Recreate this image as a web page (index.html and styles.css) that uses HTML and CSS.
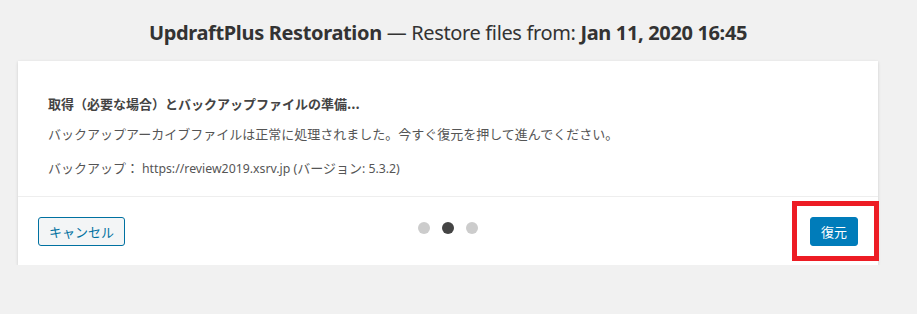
FILE: index.html
```html
<!DOCTYPE html>
<html lang="ja">
  <head>
    <meta charset="UTF-8" />
    <meta name="viewport" content="width=device-width, initial-scale=1.0" />
    <title>UpdraftPlus Restoration</title>
    <link rel="stylesheet" href="styles.css">
  </head>
  <body>
    <h1 class="title">
      <strong>UpdraftPlus Restoration</strong>&nbsp;— Restore files from:&nbsp;<strong>Jan 11, 2020 16:45</strong>
    </h1>
    <div class="card">
      <div class="card-body">
        <p class="step-title">取得（必要な場合）とバックアップファイルの準備...</p>
        <p>バックアップアーカイブファイルは正常に処理されました。今すぐ復元を押して進んでください。</p>
        <p>バックアップ： <span class="latin">https://review2019.xsrv.jp (</span>バージョン<span class="latin">: 5.3.2)</span></p>
      </div>
      <div class="card-footer">
        <button class="btn btn-secondary" type="button">キャンセル</button>
        <div class="steps">
          <span class="dot"></span>
          <span class="dot active"></span>
          <span class="dot"></span>
        </div>
        <div class="restore-wrap">
          <button class="btn btn-primary" type="button">復元</button>
          <span class="highlight"></span>
        </div>
      </div>
    </div>
  </body>
</html>
```

FILE: styles.css
```css
body {
  margin: 0;
  background-color: #f1f1f1;
  font-family: "Noto Sans", "Noto Sans CJK JP", sans-serif;
  color: #444;
}

.title {
  margin: 0 39px 0 18px;
  height: 61px;
  display: flex;
  align-items: center;
  justify-content: center;
  padding-top: 4px;
  box-sizing: border-box;
  font-size: 20px;
  font-weight: normal;
  color: #333;
  letter-spacing: -0.35px;
}

.title strong {
  font-weight: bold;
}

.card {
  margin: 0 39px 0 18px;
  background: white;
  box-shadow: 0 1px 3px rgba(0, 0, 0, 0.15);
}

.card-body {
  padding: 33px 30px 18px;
  font-family: "Noto Sans CJK JP", sans-serif;
  font-size: 13px;
  color: #555;
  border-bottom: 1px solid #eeeeee;
}

.card-body p {
  margin: 0 0 15px;
  line-height: 19px;
}

.card-body p:last-child {
  margin-bottom: 0;
}

.card-body .step-title {
  font-weight: bold;
  color: #444;
  margin-bottom: 11px;
}

.latin {
  font-family: "Noto Sans", sans-serif;
  font-size: 12.3px;
}

.card-footer {
  display: flex;
  align-items: center;
  justify-content: space-between;
  padding: 20px 20px 19px;
}

.btn {
  font-family: "Noto Sans CJK JP", sans-serif;
  font-size: 13px;
  height: 29px;
  padding: 0 8px;
  border-radius: 3px;
  cursor: pointer;
}

.btn-secondary {
  width: 87px;
  background: #f3f5f6;
  color: #0071a1;
  border: 1px solid #0071a1;
}

.btn-primary {
  width: 48px;
  background: #007cba;
  color: white;
  border: 1px solid #007cba;
}

.steps {
  display: flex;
  gap: 12px;
  margin-top: -7px;
}

.dot {
  width: 12px;
  height: 12px;
  border-radius: 50%;
  background: #cccccc;
}

.dot.active {
  background: #444444;
}

.restore-wrap {
  position: relative;
  width: 87px;
  display: flex;
  justify-content: flex-end;
}

.highlight {
  position: absolute;
  left: 21px;
  top: -16px;
  width: 87px;
  height: 60px;
  box-sizing: border-box;
  border: 5px solid #ed1c24;
}
```
